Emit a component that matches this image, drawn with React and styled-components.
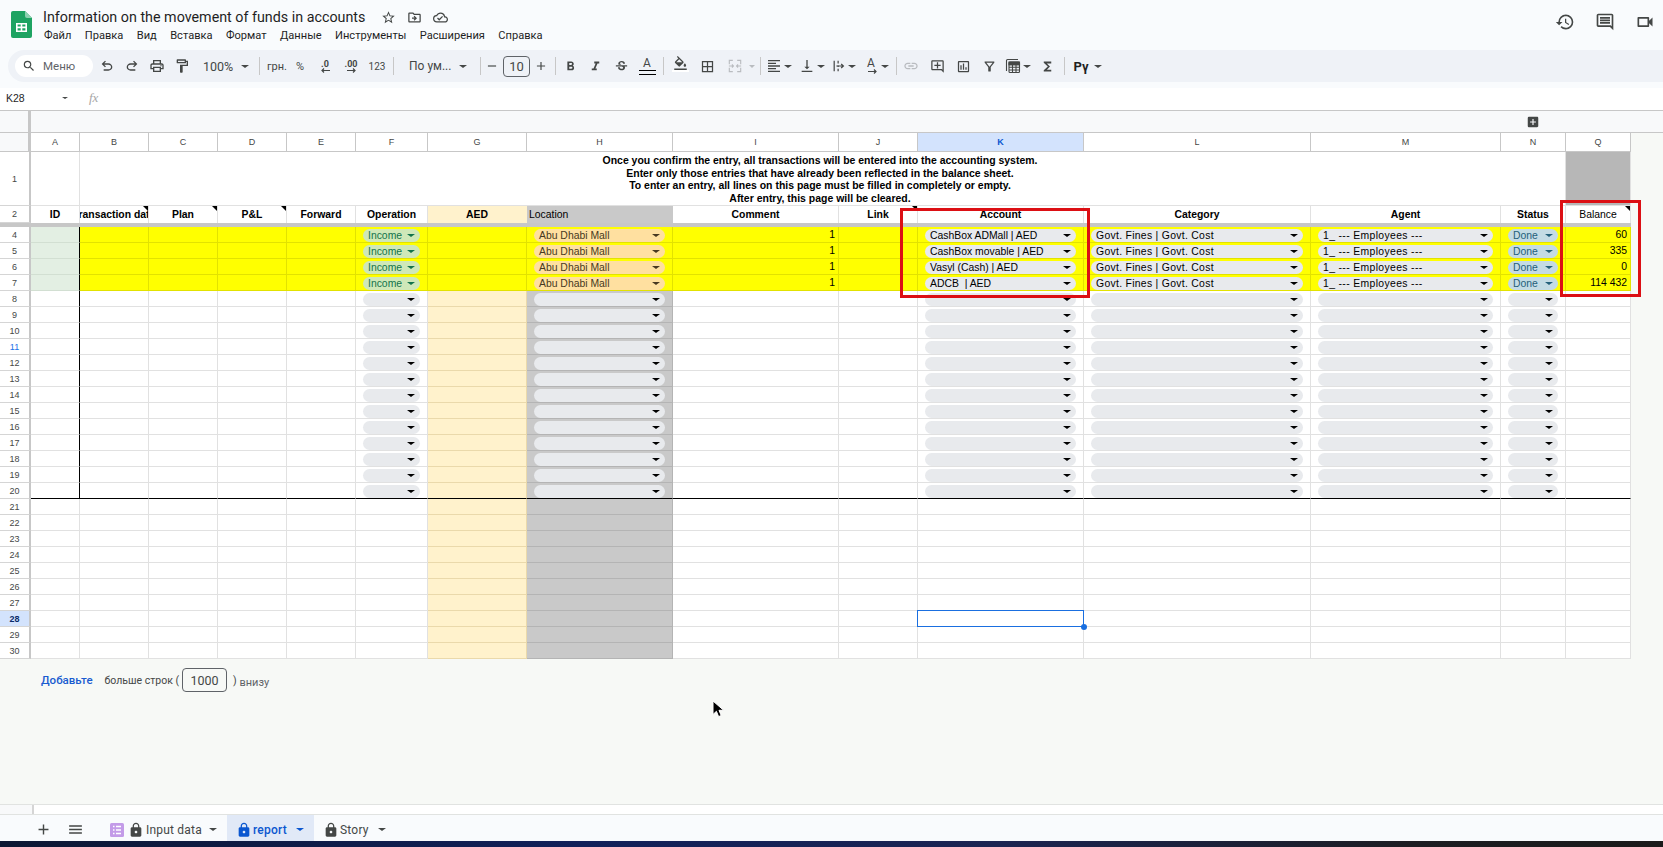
import React from "react";
import styled, { createGlobalStyle } from "styled-components";
import {
  MdOutlinePrint, MdOutlineFormatPaint, MdSearch, MdFormatBold, MdFormatItalic,
  MdStrikethroughS, MdFormatColorFill, MdBorderAll, MdFormatAlignLeft, MdVerticalAlignBottom, MdLink,
  MdOutlineAddComment, MdOutlineInsertChart, MdOutlineFilterAlt, MdFunctions, MdHistory, MdOutlineComment,
  MdOutlineVideocam, MdStarBorder, MdOutlineDriveFileMove, MdOutlineCloudDone, MdAdd, MdRemove, MdMenu, MdLock,
  MdAddBox,
} from "react-icons/md";

const Global = createGlobalStyle`
  html, body { margin: 0; padding: 0; height: 100%; overflow: hidden; background: #f7f9f6; }
  #root { height: 100%; }
  * { box-sizing: border-box; }
`;

const Page = styled.div`
  position: relative;
  height: 847px;
  width: 1663px;
  display: flex;
  flex-direction: column;
  font-family: "Liberation Sans", Arial, sans-serif;
  overflow: hidden;
`;

const Header = styled.header`
  height: 50px;
  background: #f9fbfd;
  display: flex;
  align-items: flex-start;
  padding: 11px 0 0 11px;
  flex-shrink: 0;
`;
const Logo = styled.svg`
  width: 21px;
  height: 27px;
  flex-shrink: 0;
`;
const TitleColumn = styled.div`
  margin-left: 11px;
  display: flex;
  flex-direction: column;
  flex-shrink: 0;
`;
const TitleRow = styled.div`
  display: flex;
  align-items: center;
  height: 14px;
  color: #1f1f1f;
  margin-top: -1px;
`;
const Title = styled.span`
  font: 400 14.3px Roboto, sans-serif;
  width: 332px;
  white-space: nowrap;
`;
const TitleIcon = styled.span`
  width: 26px;
  display: flex;
  justify-content: center;
  font-size: 15px;
  color: #444746;
`;
const MenuRow = styled.nav`
  display: flex;
  gap: 13.4px;
  margin-top: 4px;
  padding-left: 1px;
  font: 400 11.1px Roboto, sans-serif;
  color: #1f1f1f;
  line-height: 16px;
`;
const HeaderActions = styled.div`
  margin-left: auto;
  display: flex;
  gap: 20px;
  padding: 1px 8px 0 0;
  font-size: 20px;
  color: #444746;
`;

const ToolbarBand = styled.div`
  background: #f9fbfd;
  height: 38px;
  padding-left: 8px;
  flex-shrink: 0;
`;
const Toolbar = styled.div`
  height: 32px;
  background: #eff2f7;
  border-radius: 16px 0 0 16px;
  display: flex;
  align-items: center;
  padding-left: 7px;
  color: #444746;
`;
const SearchPill = styled.div`
  width: 78px;
  height: 22px;
  margin-right: 1.5px;
  border-radius: 11px;
  background: #fff;
  display: flex;
  align-items: center;
  padding-left: 7px;
  gap: 7px;
  font: 400 11.5px Roboto, sans-serif;
  color: #5f6368;
  svg { font-size: 14px; color: #444746; }
`;
const Tool = styled.span`
  width: ${(p) => p.$w || 25}px;
  height: 22px;
  flex-shrink: 0;
  display: flex;
  align-items: center;
  justify-content: center;
  font-size: 15px;
  color: ${(p) => (p.$dim ? "#b9bcc0" : "#444746")};
`;
const ToolDrop = styled.span`
  width: 33px;
  height: 22px;
  flex-shrink: 0;
  display: flex;
  align-items: center;
  gap: 2px;
  padding-left: ${(p) => p.$pad ?? 5}px;
  font-size: 16px;
  color: #444746;
`;
const Sep = styled.span`
  width: 1px;
  height: 18px;
  flex-shrink: 0;
  background: #c7c7c7;
  margin: 0 ${(p) => p.$r ?? 3}px 0 ${(p) => p.$l ?? 3}px;
`;
const ToolText = styled.span`
  display: flex;
  align-items: center;
  justify-content: ${(p) => (p.$left ? "space-between" : "center")};
  width: ${(p) => p.$w}px;
  padding: 0 ${(p) => p.$pr || 0}px 0 ${(p) => p.$pl || 0}px;
  height: 22px;
  flex-shrink: 0;
  font: ${(p) => p.$fw || 400} ${(p) => p.$fs || 12}px Roboto, sans-serif;
  color: ${(p) => p.$ink || "#444746"};
`;
const FontBox = styled.span`
  width: 27px;
  height: 21px;
  border: 1px solid #5f6368;
  border-radius: 4px;
  flex-shrink: 0;
  display: flex;
  align-items: center;
  justify-content: center;
  font: 400 13px Roboto, sans-serif;
  color: #444746;
`;
const DecimalTool = styled.span`
  width: 26px;
  flex-shrink: 0;
  display: flex;
  flex-direction: column;
  align-items: center;
  font: 700 9px Roboto, sans-serif;
  line-height: 8px;
  color: #444746;
`;
const ColorA = styled.span`
  display: flex;
  flex-direction: column;
  align-items: center;
  font: 400 12px Roboto, sans-serif;
  line-height: 12px;
  color: #444746;
  &::after {
    content: "";
    width: 17px;
    height: 3px;
    margin-top: 1px;
    border-top: 1px solid #000;
    border-bottom: 1px solid #000;
  }
`;
const FillStack = styled.span`
  display: flex;
  flex-direction: column;
  align-items: center;
  font-size: 15px;
  margin-top: -4px;
  &::after {
    content: "";
    width: 17px;
    height: 2px;
    background: #fff;
    margin-top: -1px;
  }
`;
const Caret = styled.span`
  display: inline-block;
  flex-shrink: 0;
  width: 0;
  height: 0;
  border-left: ${(p) => p.$s || 4}px solid transparent;
  border-right: ${(p) => p.$s || 4}px solid transparent;
  border-top: ${(p) => (p.$s || 4) * 0.9}px solid ${(p) => p.$c || "#444746"};
`;

const FormulaBar = styled.div`
  height: 23px;
  background: #fff;
  border-bottom: 1px solid #c7c7c7;
  display: flex;
  align-items: center;
  padding-bottom: 2px;
  flex-shrink: 0;
`;
const NameBox = styled.div`
  width: 89px;
  display: flex;
  align-items: center;
  padding-left: 6px;
  font: 400 10.5px "Liberation Sans", sans-serif;
  color: #1f1f1f;
  span:first-child { width: 56px; }
`;
const Fx = styled.span`
  font: italic 400 13px "Liberation Serif", serif;
  color: #a6a6a6;
`;

const Work = styled.main`
  flex: 1;
  min-height: 0;
  background: #f7f9f6;
  display: flex;
  flex-direction: column;
`;
const FreezeBand = styled.div`
  height: 22px;
  background: #f8f9fa;
  border-bottom: 1px solid #c7c7c7;
  display: flex;
  align-items: center;
  justify-content: flex-end;
  padding-right: 123px;
  color: #444746;
  font-size: 14px;
  flex-shrink: 0;
  position: relative;
  &::before {
    content: "";
    position: absolute;
    left: 28px;
    top: 0;
    bottom: 0;
    width: 3px;
    background: #c7c7c7;
  }
`;
const Grid = styled.table`
  border-collapse: separate;
  border-spacing: 0;
  table-layout: fixed;
  width: 1631px;
  flex-shrink: 0;
`;
const GridCol = styled.col`
  width: ${(p) => p.$w}px;
`;
const Corner = styled.th`
  height: 19px;
  padding: 0;
  background: #f8f9fa;
  border-right: 3px solid #c7c7c7;
  border-bottom: 1px solid #c7c7c7;
`;
const ColLabel = styled.th`
  height: 19px;
  padding: 0;
  font: ${(p) => (p.$active ? 700 : 400)} 9px "Liberation Sans", sans-serif;
  color: ${(p) => (p.$active ? "#0b57d0" : "#444746")};
  background: ${(p) => (p.$active ? "#d3e3fd" : "#fff")};
  border-right: 1px solid #c7c7c7;
  border-bottom: 1px solid #c7c7c7;
`;
const RowLabel = styled.th`
  padding: 0;
  font: ${(p) => (p.$active ? 700 : 400)} 9px "Liberation Sans", sans-serif;
  color: ${(p) => (p.$active ? "#0b2c6b" : p.$link ? "#1a73e8" : "#444746")};
  background: ${(p) => (p.$active ? "#d3e3fd" : "#fff")};
  border-right: 2px solid #c7c7c7;
  border-bottom: 1px solid #d5d5d5;
  text-align: center;
`;

const tones = {
  plain: { bg: "#fff", line: "#e1e1e1" },
  yellow: { bg: "#ffff00", line: "#e2e200" },
  mint: { bg: "#e3efe3", line: "#d2dfd2" },
  cream: { bg: "#fff2cc", line: "#ead9ab" },
  slate: { bg: "#c9c9c9", line: "#b4b4b4" },
};

const Cell = styled.td`
  position: relative;
  height: 16px;
  padding: 0;
  background: ${(p) => tones[p.$tone].bg};
  border-right: 1px solid ${(p) => (p.$axis ? "#000" : tones[p.$tone].line)};
  border-bottom: 1px solid ${(p) => (p.$rule ? "#000" : tones[p.$tone].line)};
  font: 400 10.4px "Liberation Sans", sans-serif;
  color: #000;
  text-align: right;
  vertical-align: top;
  line-height: 15px;
`;
const CellValue = styled.span`
  padding-right: 3px;
`;
const Pill = styled.div`
  height: 13px;
  margin: 2px 7px 0;
  padding: 0 5px;
  border-radius: 7px;
  background: ${(p) => p.$bg};
  color: ${(p) => p.$fg};
  letter-spacing: ${(p) => p.$track || 0}px;
  display: flex;
  align-items: center;
  justify-content: space-between;
  text-align: left;
  line-height: 13px;
  white-space: pre;
`;
const NoticeCell = styled.td`
  height: 53px;
  padding: 3px 5px 0 0;
  background: #fff;
  border-bottom: 1px solid #e1e1e1;
  border-right: 1px solid #e1e1e1;
  text-align: center;
  vertical-align: top;
  font: 700 10.48px/12.5px "Liberation Sans", sans-serif;
  color: #000;
`;
const BlankTall = styled.td`
  padding: 0;
  background: ${(p) => p.$bg || "#fff"};
  border-bottom: 1px solid #e1e1e1;
  border-right: 1px solid #e1e1e1;
`;
const HeadCell = styled.td`
  position: relative;
  height: 17px;
  padding: 0 ${(p) => (p.$left ? "2px" : 0)};
  background: ${(p) => p.$bg || "#fff"};
  border-right: 1px solid ${(p) => (p.$bg ? "transparent" : "#e1e1e1")};
  font: ${(p) => (p.$light ? 400 : 700)} 10.4px "Liberation Sans", sans-serif;
  color: #000;
  text-align: ${(p) => (p.$left ? "left" : "center")};
  overflow: hidden;
`;
const HeadClip = styled.div`
  display: flex;
  justify-content: ${(p) => (p.$left ? "flex-start" : "center")};
  white-space: nowrap;
`;
const NoteMark = styled.span`
  position: absolute;
  right: 0;
  top: 0;
  width: 0;
  height: 0;
  border-top: 5px solid #000;
  border-left: 5px solid transparent;
`;
const BandCell = styled.td`
  height: 4px;
  padding: 0;
  background: #c7c7c7;
  line-height: 0;
`;
const Selection = styled.span`
  position: absolute;
  z-index: 2;
  left: -1px;
  top: -1px;
  right: -1px;
  bottom: -1px;
  border: 1.5px solid #1a6fe0;
  pointer-events: none;
  &::after {
    content: "";
    position: absolute;
    right: -4px;
    bottom: -4px;
    width: 6px;
    height: 6px;
    border-radius: 50%;
    background: #1a6fe0;
  }
`;

const AddRows = styled.div`
  display: flex;
  align-items: center;
  padding: 9px 0 0 41px;
  color: #444746;
  font: 400 10.5px Roboto, sans-serif;
  flex-shrink: 0;
`;
const AddLink = styled.span`
  font: 500 11.5px Roboto, sans-serif;
  color: #1a5cd0;
  margin-right: 12px;
`;
const CountBox = styled.span`
  width: 45px;
  height: 24px;
  margin: 0 6px 0 3px;
  border: 1px solid #5f6368;
  border-radius: 4px;
  display: flex;
  align-items: center;
  justify-content: center;
  font-size: 12.5px;
`;
const AddTail = styled.span`
  font-size: 11px;
  margin-top: 5px;
  color: #5f6368;
`;

const ScrollTrack = styled.div`
  margin-top: auto;
  height: 11px;
  background: #fff;
  border-top: 1px solid #e1e3e1;
  border-bottom: 1px solid #e1e3e1;
  flex-shrink: 0;
  &::before {
    content: "";
    display: block;
    width: 32px;
    height: 100%;
    background: #f8f9fa;
    border-right: 2px solid #d5d5d5;
  }
`;
const TabsBar = styled.footer`
  height: 26px;
  background: #f9fbfd;
  display: flex;
  align-items: stretch;
  flex-shrink: 0;
  color: #444746;
`;
const BarButton = styled.span`
  width: ${(p) => p.$w}px;
  margin-left: ${(p) => p.$ml || 0}px;
  padding-top: 3px;
  display: flex;
  align-items: center;
  justify-content: center;
  font-size: 17px;
`;
const SheetTab = styled.div`
  display: flex;
  align-items: center;
  width: ${(p) => p.$w}px;
  padding: 3px 0 0 ${(p) => p.$pl}px;
  background: ${(p) => (p.$active ? "#e1e9f7" : "transparent")};
  color: ${(p) => (p.$active ? "#0b57d0" : "#444746")};
  font: ${(p) => (p.$active ? 500 : 400)} 12px Roboto, sans-serif;
  letter-spacing: 0.2px;
  > svg { font-size: 16px; flex-shrink: 0; }
`;
const ListBadge = styled.svg`
  width: 14px;
  height: 14px;
  margin-right: 4px;
`;
const TabLabel = styled.span`
  margin: 0 ${(p) => p.$gap}px 0 ${(p) => p.$lead || 1}px;
  white-space: nowrap;
`;
const Taskbar = styled.div`
  height: 6px;
  flex-shrink: 0;
  background: linear-gradient(90deg, #0c1733 0%, #11205a 35%, #1b2452 60%, #1c1d22 85%, #1a1a1a 100%);
`;

const Outline = styled.span`
  position: absolute;
  left: ${(p) => p.$x}px;
  top: ${(p) => p.$y}px;
  width: ${(p) => p.$w}px;
  height: ${(p) => p.$h}px;
  border: 3px solid #dc0f14;
  pointer-events: none;
`;
const Pointer = styled.svg`
  position: absolute;
  left: 712px;
  top: 700px;
  width: 12px;
  height: 18px;
`;

const widths = [31, 49, 69, 69, 69, 69, 72, 99, 146, 166, 79, 166, 227, 190, 65, 65];
const letters = ["A", "B", "C", "D", "E", "F", "G", "H", "I", "J", "K", "L", "M", "N", "Q"];
const notice = [
  "Once you confirm the entry, all transactions will be entered into the accounting system.",
  "Enter only those entries that have already been reflected in the balance sheet.",
  "To enter an entry, all lines on this page must be filled in completely or empty.",
  "After entry, this page will be cleared.",
];
const accounts = ["CashBox ADMall | AED", "CashBox movable | AED", "Vasyl (Cash) | AED", "ADCB  | AED"];
const balances = ["60", "335", "0", "114 432"];
const pillColumns = {
  F: { bg: "#cfe8b8", fg: "#11734b", text: () => "Income" },
  H: { bg: "#ffe0a0", fg: "#473821", text: () => "Abu Dhabi Mall" },
  K: { bg: "#e8eaed", fg: "#000", text: (i) => accounts[i] },
  L: { bg: "#e8eaed", fg: "#000", track: 0.3, text: () => "Govt. Fines | Govt. Cost" },
  M: { bg: "#e8eaed", fg: "#000", track: 0.36, text: () => "1_ --- Employees ---" },
  N: { bg: "#c4dbe4", fg: "#24607a", text: () => "Done" },
};
const headers = {
  A: "ID", B: "Transaction date", C: "Plan", D: "P&L", E: "Forward", F: "Operation", G: "AED", H: "Location",
  I: "Comment", J: "Link", K: "Account", L: "Category", M: "Agent", N: "Status", Q: "Balance",
};
const noted = new Set(["B", "C", "D", "J", "Q"]);
const dataRows = Array.from({ length: 27 }, (_, i) => i + 4);

function toneOf(col, row) {
  if (row <= 7) return col === "A" ? "mint" : "yellow";
  if (col === "G") return "cream";
  if (col === "H") return "slate";
  return "plain";
}

function DataCell({ col, row }) {
  const spec = pillColumns[col];
  const filled = row <= 7;
  const selected = col === "K" && row === 28;
  let body = null;
  if (spec && row <= 20) {
    body = (
      <Pill $bg={filled ? spec.bg : "#e8eaed"} $fg={spec.fg} $track={spec.track}>
        <span>{filled ? spec.text(row - 4) : ""}</span>
        <Caret $s={4} $c={filled ? spec.fg : "#000"} />
      </Pill>
    );
  } else if (filled && col === "I") {
    body = <CellValue>1</CellValue>;
  } else if (filled && col === "Q") {
    body = <CellValue>{balances[row - 4]}</CellValue>;
  }
  return (
    <Cell $tone={toneOf(col, row)} $axis={col === "A" && row <= 20} $rule={row === 20}>
      {body}
      {selected && <Selection />}
    </Cell>
  );
}

const SymbolGlyph = ({ d }) => (
  <svg width="16" height="16" viewBox="0 -960 960 960" fill="#444746"><path d={d} /></svg>
);
const UNDO = "M280-200v-80h284q63 0 109.500-40T720-420q0-60-46.500-100T564-560H312l104 104-56 56-200-200 200-200 56 56-104 104h252q97 0 166.500 63T800-420q0 94-69.500 157T564-200H280Z";
const REDO = "M396-200q-97 0-166.500-63T160-420q0-94 69.500-157T396-640h252L544-744l56-56 200 200-200 200-56-56 104-104H396q-63 0-109.500 40T240-420q0 60 46.500 100T396-280h284v80H396Z";

const MergeGlyph = () => (
  <svg width="14" height="14" viewBox="0 0 16 16" fill="none" stroke="#b9bcc0" strokeWidth="1.3">
    <path d="M1.500 6V1.500h4M10.500 1.500h4V6M1.500 10v4.500h4M10.500 14.500h4V10M1 8h5M4.500 6.300 6.200 8 4.500 9.700M15 8h-5M11.500 6.300 9.800 8l1.700 1.700" />
  </svg>
);
const WrapGlyph = () => (
  <svg width="14" height="14" viewBox="0 0 16 16" fill="none" stroke="#444746" strokeWidth="1.4">
    <path d="M2.500 2v12M7 2v3M7 7v2M7 11v3M5 8h8M10.500 5.700 13 8l-2.500 2.300" />
  </svg>
);
const FunctionsTableGlyph = () => (
  <svg width="16" height="16" viewBox="0 0 16 16" fill="none" stroke="#444746" strokeWidth="1.1">
    <path d="M1.500 13V2.500a1 1 0 0 1 1-1H13" />
    <rect x="4" y="4" width="10.500" height="10.500" rx="1" />
    <path d="M4 6.800h10.500M4 9.300h10.500M4 12h10.500M7.500 6.800v7.700M11 6.800v7.700" />
    <path d="M4 4h10.500v2.800H4z" fill="#444746" />
  </svg>
);
const ArrowGlyph = ({ flip }) => (
  <svg width="11" height="5" viewBox="0 0 11 5" fill="none" stroke="#444746" strokeWidth="1.2">
    {flip ? <path d="M10 2.500H2M4 .5 2 2.500l2 2" /> : <path d="M1 2.500h8M7 .5l2 2-2 2" />}
  </svg>
);
const RotateA = styled.span`
  display: flex;
  flex-direction: column;
  align-items: flex-start;
  width: 14px;
  font: 400 12px Roboto, sans-serif;
  line-height: 11px;
  color: #444746;
  padding-left: 2px;
`;

export default function App() {
  return (
    <Page>
      <Global />
      <Header>
        <Logo viewBox="0 0 21 27">
          <path d="M2 0h12l7 7v18a2 2 0 0 1-2 2H2a2 2 0 0 1-2-2V2a2 2 0 0 1 2-2z" fill="#1ea362" />
          <path d="M14 0l7 7h-5a2 2 0 0 1-2-2z" fill="#8ed1b1" />
          <path d="M5 12h11v9H5z M6.600 13.600v2h3.100v-2z M11.300 13.600v2h3.100v-2z M6.600 17.200v2.200h3.100v-2.200z M11.300 17.200v2.200h3.100v-2.200z" fill="#fff" fillRule="evenodd" />
        </Logo>
        <TitleColumn>
          <TitleRow>
            <Title>Information on the movement of funds in accounts</Title>
            <TitleIcon><MdStarBorder /></TitleIcon>
            <TitleIcon><MdOutlineDriveFileMove /></TitleIcon>
            <TitleIcon><MdOutlineCloudDone /></TitleIcon>
          </TitleRow>
          <MenuRow>
            {["Файл", "Правка", "Вид", "Вставка", "Формат", "Данные", "Инструменты", "Расширения", "Справка"].map((m) => (
              <span key={m}>{m}</span>
            ))}
          </MenuRow>
        </TitleColumn>
        <HeaderActions>
          <MdHistory />
          <MdOutlineComment />
          <MdOutlineVideocam />
        </HeaderActions>
      </Header>

      <ToolbarBand>
        <Toolbar>
          <SearchPill><MdSearch /><span>Меню</span></SearchPill>
          <Tool><SymbolGlyph d={UNDO} /></Tool>
          <Tool><SymbolGlyph d={REDO} /></Tool>
          <Tool $w={25}><MdOutlinePrint size={16} /></Tool>
          <Tool><MdOutlineFormatPaint size={16} /></Tool>
          <ToolText $w={57.5} $pl={8.5} $pr={3} $fs={12.5} $left><span>100%</span><Caret /></ToolText>
          <Sep $l={7} $r={6} />
          <ToolText $w={22} $fs={11}>грн.</ToolText>
          <ToolText $w={24} $fs={11}>%</ToolText>
          <DecimalTool>.0<ArrowGlyph flip /></DecimalTool>
          <DecimalTool>.00<ArrowGlyph /></DecimalTool>
          <ToolText $w={26} $fs={10}>123</ToolText>
          <Sep />
          <ToolText $w={75} $pl={12} $pr={5} $left><span>По ум...</span><Caret /></ToolText>
          <Sep $l={8} $r={0} />
          <Tool $w={22}><MdRemove size={14} /></Tool>
          <FontBox>10</FontBox>
          <Tool $w={22}><MdAdd size={14} /></Tool>
          <Sep $r={2} />
          <Tool><MdFormatBold /></Tool>
          <Tool><MdFormatItalic /></Tool>
          <Tool $w={26}><MdStrikethroughS /></Tool>
          <Tool $w={26}><ColorA>A</ColorA></Tool>
          <Sep $r={3} />
          <Tool $w={26}><FillStack><MdFormatColorFill /></FillStack></Tool>
          <Tool $w={28}><MdBorderAll /></Tool>
          <Tool $w={27}><MergeGlyph /></Tool>
          <Tool $w={8}><Caret $s={3.5} $c="#b9bcc0" /></Tool>
          <Sep $l={4} $r={0} />
          <ToolDrop><MdFormatAlignLeft /><Caret /></ToolDrop>
          <ToolDrop><MdVerticalAlignBottom /><Caret /></ToolDrop>
          <ToolDrop><WrapGlyph /><Caret /></ToolDrop>
          <ToolDrop><RotateA>A<ArrowGlyph /></RotateA><Caret /></ToolDrop>
          <Sep $r={1} />
          <Tool $w={26} $dim><MdLink size={16} /></Tool>
          <Tool $w={26}><MdOutlineAddComment /></Tool>
          <Tool $w={26}><MdOutlineInsertChart /></Tool>
          <Tool $w={26}><MdOutlineFilterAlt /></Tool>
          <ToolDrop $pad={3}><FunctionsTableGlyph /><Caret /></ToolDrop>
          <Tool $w={24}><MdFunctions /></Tool>
          <Sep $l={5} $r={7} />
          <ToolText $w={18} $fs={13} $fw={700} $ink="#1f1f1f">Рү</ToolText>
          <ToolText $w={16}><Caret /></ToolText>
        </Toolbar>
      </ToolbarBand>

      <FormulaBar>
        <NameBox><span>K28</span><Caret $s={3} /></NameBox>
        <Fx>fx</Fx>
      </FormulaBar>

      <Work>
        <FreezeBand><MdAddBox /></FreezeBand>
        <Grid>
          <colgroup>
            {widths.map((w, i) => <GridCol key={i} $w={w} />)}
          </colgroup>
          <tbody>
            <tr>
              <Corner />
              {letters.map((l) => <ColLabel key={l} $active={l === "K"}>{l}</ColLabel>)}
            </tr>
            <tr>
              <RowLabel>1</RowLabel>
              <BlankTall />
              <NoticeCell colSpan={13}>
                {notice.map((line) => <div key={line}>{line}</div>)}
              </NoticeCell>
              <BlankTall $bg="#b7b7b7" />
            </tr>
            <tr>
              <RowLabel>2</RowLabel>
              {letters.map((l) => (
                <HeadCell
                  key={l}
                  $bg={l === "G" ? "#fff2cc" : l === "H" ? "#c9c9c9" : undefined}
                  $left={l === "H"}
                  $light={l === "H" || l === "Q"}
                >
                  <HeadClip $left={l === "H"}>{headers[l]}</HeadClip>
                  {noted.has(l) && <NoteMark />}
                </HeadCell>
              ))}
            </tr>
            <tr>
              <BandCell colSpan={16} />
            </tr>
            {dataRows.map((row) => (
              <tr key={row}>
                <RowLabel $active={row === 28} $link={row === 11}>{row}</RowLabel>
                {letters.map((col) => <DataCell key={col} col={col} row={row} />)}
              </tr>
            ))}
          </tbody>
        </Grid>
        <AddRows>
          <AddLink>Добавьте</AddLink>
          <span>больше строк (</span>
          <CountBox>1000</CountBox>
          <span>)</span>
          <AddTail>&nbsp;внизу</AddTail>
        </AddRows>
        <ScrollTrack />
      </Work>

      <TabsBar>
        <BarButton $w={24} $ml={31}><MdAdd /></BarButton>
        <BarButton $w={24} $ml={8}><MdMenu /></BarButton>
        <SheetTab $w={140} $pl={23}>
          <ListBadge viewBox="0 0 14 14">
            <rect width="14" height="14" rx="1.5" fill="#c39be8" />
            <path d="M3 3.500h1.500M6 3.500h5M3 7h1.500M6 7h5M3 10.500h1.500M6 10.500h5" stroke="#fff" strokeWidth="1.300" />
          </ListBadge>
          <MdLock />
          <TabLabel $gap={7} $lead={2}>Input data</TabLabel>
          <Caret />
        </SheetTab>
        <SheetTab $w={87} $pl={9} $active>
          <MdLock />
          <TabLabel $gap={9}>report</TabLabel>
          <Caret $c="#0b57d0" />
        </SheetTab>
        <SheetTab $w={80} $pl={9}>
          <MdLock />
          <TabLabel $gap={9}>Story</TabLabel>
          <Caret />
        </SheetTab>
      </TabsBar>
      <Taskbar />

      <Outline $x={900} $y={208} $w={190} $h={90} />
      <Outline $x={1560} $y={200} $w={81} $h={97} />
      <Pointer viewBox="0 0 12 18">
        <path d="M1 1v13.500l3.400-3.200 2.200 5.300 2.600-1.100-2.200-5.200h4.700z" fill="#000" stroke="#fff" strokeWidth="1" />
      </Pointer>
    </Page>
  );
}
